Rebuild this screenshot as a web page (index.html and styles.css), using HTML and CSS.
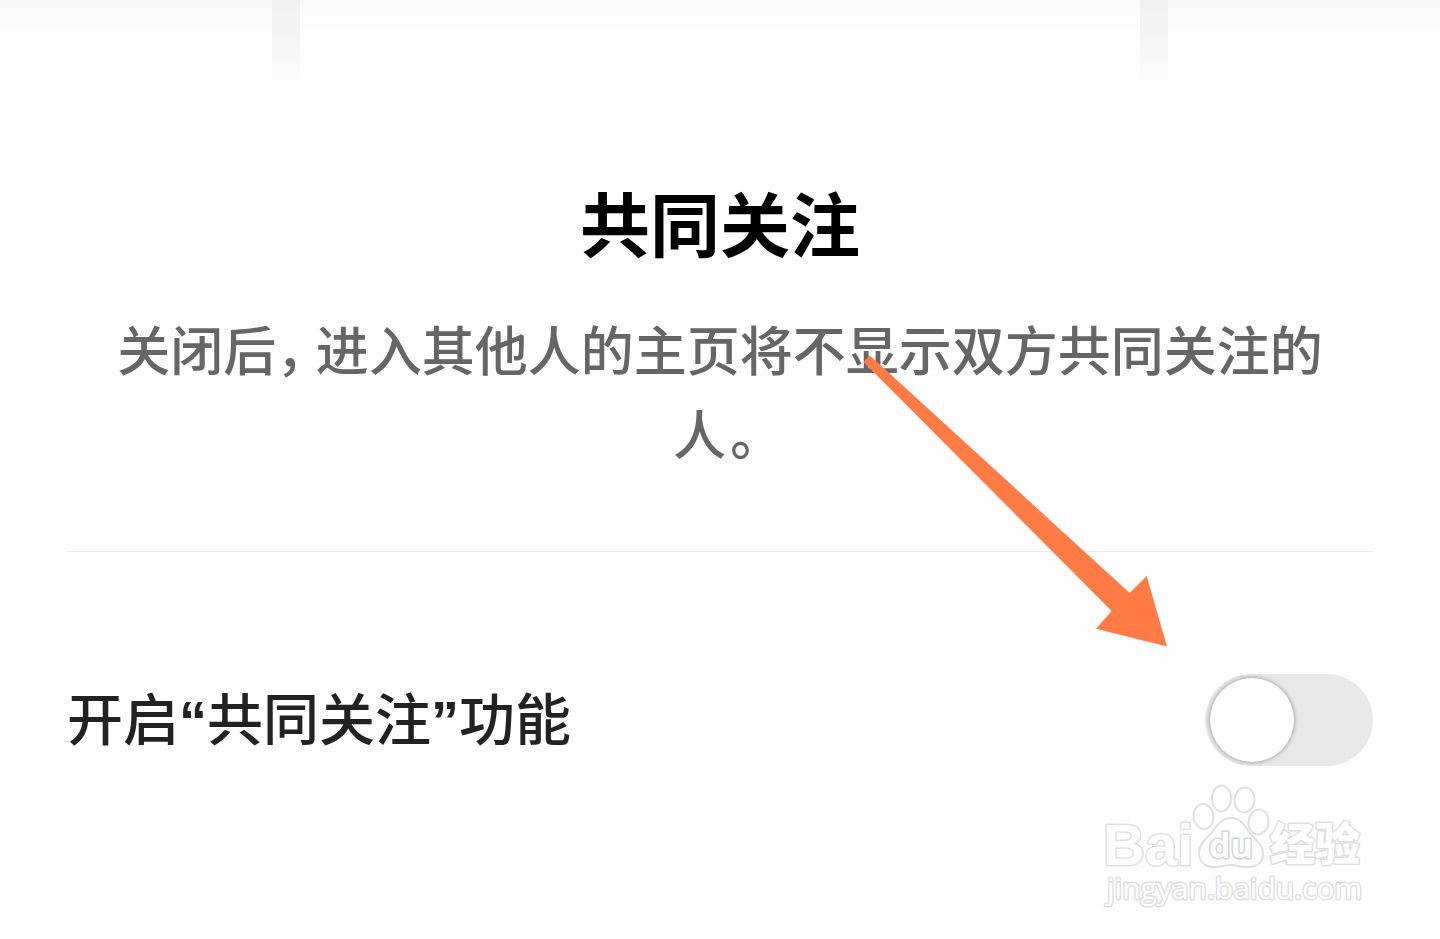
FILE: index.html
```html
<!DOCTYPE html>
<html lang="zh-CN">
<head>
<meta charset="utf-8">
<meta name="viewport" content="width=device-width, initial-scale=1">
<title>共同关注</title>
<link rel="stylesheet" href="styles.css">
</head>
<body>
<div class="page">
  <div class="top-shade" aria-hidden="true"><span class="shade-bar"></span><span class="shade-center"></span><span class="shade-bar"></span></div>
  <main class="settings">
    <header class="intro">
      <h1 class="title">共同关注</h1>
      <p class="description">关闭后<span class="comma">，</span>进入其他人的主页将不显示双方共同关注的人<span class="stop">。</span></p>
    </header>
    <div class="setting-row">
      <label class="setting-label" for="mutual">开启<span class="quote">“</span>共同关注<span class="quote">”</span>功能</label>
      <input class="switch" type="checkbox" role="switch" id="mutual">
    </div>
  </main>
  <svg class="arrow" viewBox="863 355 304 292" aria-hidden="true">
    <path d="M870 355.500L1129.700 593L1146.700 576L1167 646.500L1096 628.700L1111.700 611L863.500 362Z"/>
  </svg>
  <svg class="watermark" viewBox="1100 780 270 135" role="img" aria-label="Baidu 经验">
    <g class="mark">
      <ellipse cx="1203.500" cy="816.500" rx="10" ry="12.500" transform="rotate(-8 1203.500 816.500)"/>
      <ellipse cx="1221.500" cy="798.500" rx="9.500" ry="13"/>
      <ellipse cx="1244.500" cy="800" rx="10" ry="12.500" transform="rotate(8 1244.500 800)"/>
      <ellipse cx="1258.500" cy="822" rx="10" ry="12.500" transform="rotate(8 1258.500 822)"/>
      <text class="bai" x="1103" y="865">Bai</text>
      <path d="M1231 818C1222 818 1218 824 1213 831C1208 838 1199 842 1199 853C1199 862 1205 867 1214 867C1221 867 1225 865 1231 865C1237 865 1241 868 1249 867C1258 867 1264 861 1263 852C1262 843 1254 839 1249 832C1244 824 1240 818 1231 818Z"/>
      <text class="du" x="1209" y="858">du</text>
      <text class="jingyan" x="1270" y="861">经验</text>
      <text class="url" x="1107" y="899">jingyan.baidu.com</text>
    </g>
  </svg>
</div>
</body>
</html>
```
FILE: styles.css
```css
* { box-sizing: border-box; }

body {
  margin: 0;
  background: #fefefe;
  font-family: "Noto Sans CJK SC", sans-serif;
}

.page {
  position: relative;
  min-height: 100vh;
  overflow: hidden;
}

.top-shade {
  display: flex;
  height: 84px;
  padding: 0 18.9%;
  background: linear-gradient(#f8f8f8, #fbfbfb 28px, #fdfdfd 30px, #fdfdfd 66px, #fefefe 67px);
}

.shade-bar {
  flex: none;
  width: 28px;
  background: linear-gradient(#f1f1f1, #f8f8f8 60px, #fefefe);
}

.shade-center {
  flex: 1;
  background: linear-gradient(#f9f9f9, #fcfcfc 14px, #fdfdfd 27px, #fefefe 28px);
}

.settings { padding: 0 67px; }

.intro {
  padding: 88px 48px 77px;
  border-bottom: 1px solid #e8ecec;
  text-align: center;
}

.title {
  margin: 0;
  color: #000;
  font-size: 70px;
  font-weight: 700;
  line-height: 100px;
}

.description {
  margin: 34px 0 0;
  color: #666;
  font-size: 53px;
  font-weight: 500;
  line-height: 84px;
}

.comma,
.stop { font-feature-settings: "halt"; }

.comma { margin-right: 13px; }
.stop { margin: 0 10px 0 4px; }

.setting-row {
  display: flex;
  align-items: flex-start;
  justify-content: space-between;
  padding-top: 122px;
}

.setting-label {
  color: #222;
  font-size: 56px;
  font-weight: 500;
  line-height: 84px;
}

.quote {
  font-family: "Liberation Sans", sans-serif;
  font-weight: 700;
  line-height: 1;
}

.switch {
  appearance: none;
  flex: none;
  width: 168px;
  height: 92px;
  margin: 0;
  padding: 4px 5px;
  border-radius: 46px;
  background: #e8e8e8;
  cursor: pointer;
}

.switch::before {
  content: "";
  display: block;
  width: 84px;
  height: 84px;
  border-radius: 50%;
  background: #fff;
  box-shadow: 0 0 5px rgba(0, 0, 0, 0.4);
}

.switch:checked { background: #ff7a45; }
.switch:checked::before { margin-left: auto; }

.arrow {
  position: absolute;
  top: 355px;
  left: 59.9%;
  width: 304px;
  fill: #ff7b45;
  pointer-events: none;
}

.watermark {
  position: absolute;
  right: 70px;
  bottom: 24px;
  width: 270px;
}

.mark {
  fill: #fefefe;
  stroke: #dfdfdf;
  stroke-width: 2px;
  stroke-linejoin: round;
}

.mark text { paint-order: stroke; stroke-width: 3px; }
.bai { font: 700 58px "Liberation Sans", sans-serif; }
.mark .du { font: 700 34px "Open Sans", sans-serif; stroke: #d4d4d4; }
.jingyan { font: 900 45px "Noto Sans CJK SC", sans-serif; }
.url { font: 400 30px "Open Sans", sans-serif; }
```
